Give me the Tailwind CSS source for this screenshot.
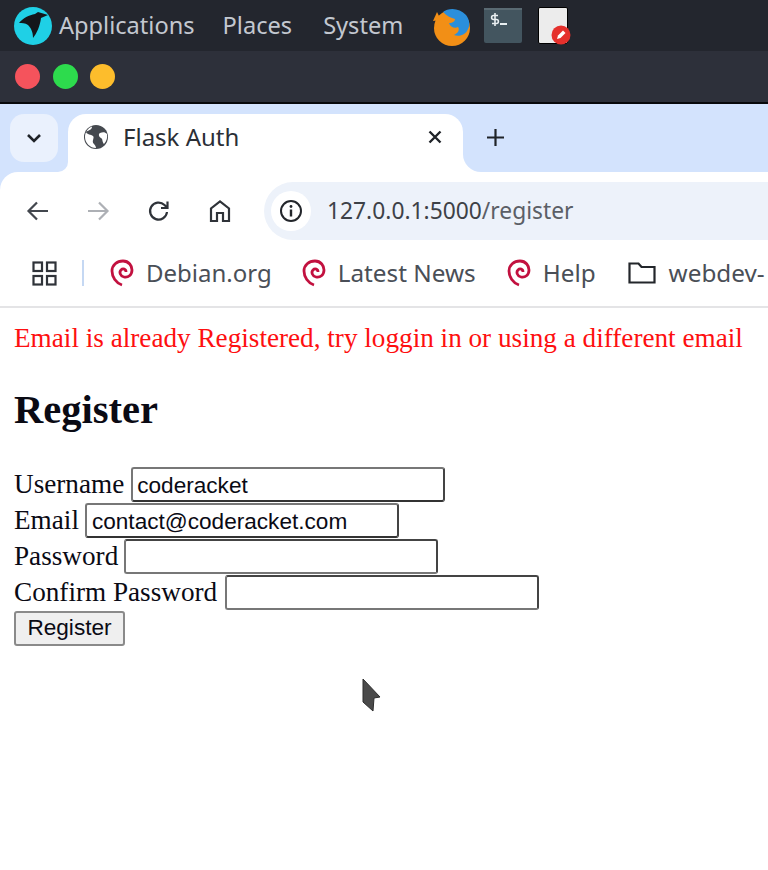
<!DOCTYPE html>
<html lang="en">
<head>
    <meta charset="UTF-8">
    <meta name="viewport" content="width=device-width, initial-scale=1.0">
    <title>Flask Auth</title>
    <script src="https://cdn.jsdelivr.net/npm/@tailwindcss/browser@4"></script>
</head>
<body class="w-[768px] h-[870px] overflow-hidden bg-[#d3e3fd] font-['Noto_Sans',sans-serif]">
    <!-- desktop panel -->
    <div class="h-[51px] bg-[#23262e] flex items-center pl-[13px] text-[#c3c8d0] text-[23.6px] overflow-hidden">
        <svg class="w-[40px] h-[40px] shrink-0" viewBox="0 0 40 40">
            <circle cx="20" cy="20" r="19" fill="#1fd0e6"/>
            <path d="M6 17 C10 12 16 9 22 8 L25 6 L35 9 L28 12 C27 20 24 27 20 32 C20 26 18 22 15 19 C12 17 9 17 6 17 Z" fill="#14161a"/>
        </svg>
        <span class="ml-[6px]">Applications</span>
        <span class="ml-[28px]">Places</span>
        <span class="ml-[31px]">System</span>
        <svg class="w-[40px] h-[40px] ml-[29px] shrink-0" viewBox="0 0 40 40">
            <circle cx="20" cy="22" r="18" fill="#f28f16"/>
            <path d="M11 6 C17 1 28 2 34 9 C38 14 38 20 36 23 C34 29 27 31 22 29 C26 27 28 24 26 21 C23 23 18 21 17 17 C21 17 23 15 23 13 C19 12 15 10 11 6 Z" fill="#2b8fdc"/>
            <path d="M1 15 L5 6 L9 14 Z" fill="#f28f16"/>
        </svg>
        <svg class="w-[38px] h-[35px] ml-[12px] shrink-0" viewBox="0 0 38 35">
            <rect x="0" y="0" width="38" height="35" rx="2" fill="#43555f"/>
            <rect x="0" y="0" width="38" height="2" fill="#5a6a73"/>
            <path d="M11 5 V18 M14 7.500 H9.500 C7 7.500 7 11.500 9.500 11.500 H12.500 C15 11.500 15 15.500 12.500 15.500 H8" fill="none" stroke="#e8eef0" stroke-width="1.600"/>
            <rect x="16" y="15" width="7" height="2" fill="#e8eef0"/>
        </svg>
        <div class="relative w-[30px] h-[37px] ml-[16px] shrink-0 bg-[#ececec] border border-black rounded-[2px]">
            <svg class="absolute left-[12px] top-[17px] w-[20px] h-[20px]" viewBox="0 0 20 20">
                <circle cx="10" cy="10" r="9.500" fill="#e5302c"/>
                <path d="M6 14 L7 10.500 L12 5.500 L14.500 8 L9.500 13 Z" fill="#fff"/>
            </svg>
        </div>
    </div>
    <!-- window title bar -->
    <div class="h-[51px] bg-[#2d303a] flex items-center gap-[12.5px] pl-[15px]">
        <div class="w-[25px] h-[25px] rounded-full bg-[#f5535c]"></div>
        <div class="w-[25px] h-[25px] rounded-full bg-[#2ddb4d]"></div>
        <div class="w-[25px] h-[25px] rounded-full bg-[#fdbd2c]"></div>
    </div>
    <div class="h-[2px] bg-[#08090b]"></div>
    <!-- tab strip -->
    <div class="h-[68px] bg-[#d3e3fd] flex items-start pt-[10px] pl-[10px]">
        <div class="w-[48px] h-[48px] rounded-[14px] bg-[#eaf1fd] flex items-center justify-center">
            <svg class="w-[16px] h-[10px]" viewBox="0 0 16 10"><path d="M2 2 L8 8 L14 2" fill="none" stroke="#1f2328" stroke-width="2.600"/></svg>
        </div>
        <div class="relative w-[395px] h-[58px] ml-[10px] bg-white rounded-t-[18px] flex items-center pl-[15px] pb-[12px] text-[#2b2f36] text-[24px]">
            <!-- concave corners at the foot of the tab -->
            <div class="absolute left-[-10px] bottom-0 w-[10px] h-[10px] bg-white"><div class="w-full h-full bg-[#d3e3fd] rounded-br-[10px]"></div></div>
            <div class="absolute right-[-18px] bottom-0 w-[18px] h-[18px] bg-white"><div class="w-full h-full bg-[#d3e3fd] rounded-bl-[18px]"></div></div>
            <svg class="w-[26px] h-[26px] shrink-0" viewBox="0 0 26 26">
                <circle cx="13" cy="13" r="12" fill="#45494f"/>
                <path d="M9 2.500 C9 6 6 6 3 8 C4 11 8 10 10 12 C12 14 8 17 11 20 C13 22 13 24 13 24 C7 24 2 19 2 13 C2 8 5 4 9 2.500 Z M17 9 C20 8 22 8 24 10 C24.500 13 24 17 21 20 C19 18 20 15 18 14 C16 13 15 10 17 9 Z" fill="#fff"/>
            </svg>
            <span class="ml-[14px] leading-none">Flask Auth</span>
            <svg class="w-[14px] h-[14px] ml-auto mr-[21px]" viewBox="0 0 14 14"><path d="M1.500 1.500 L12.500 12.500 M12.500 1.500 L1.500 12.500" stroke="#1f2328" stroke-width="2.400"/></svg>
        </div>
        <svg class="w-[17px] h-[17px] ml-[24px] mt-[15px]" viewBox="0 0 17 17"><path d="M8.500 0 V17 M0 8.500 H17" stroke="#1f2328" stroke-width="2.200"/></svg>
    </div>
    <!-- toolbar -->
    <div class="h-[68px] bg-white pt-[10px] rounded-tl-[18px] flex items-center pl-[26px] overflow-hidden">
        <svg class="w-[24px] h-[24px] shrink-0" viewBox="0 0 24 24"><path d="M22 12 H3 M11 3.500 L2.500 12 L11 20.500" fill="none" stroke="#43474e" stroke-width="2.200"/></svg>
        <svg class="w-[24px] h-[24px] ml-[36px] shrink-0" viewBox="0 0 24 24"><path d="M2 12 H21 M13 3.500 L21.500 12 L13 20.500" fill="none" stroke="#adb0b5" stroke-width="2.200"/></svg>
        <svg class="w-[24px] h-[24px] ml-[37px] shrink-0" viewBox="0 0 24 24"><path d="M20 13 A8.500 8.500 0 1 1 17.500 6 L20.500 9 M20.500 2.500 V9 H14" fill="none" stroke="#2f3339" stroke-width="2.200"/></svg>
        <svg class="w-[24px] h-[24px] ml-[37px] shrink-0" viewBox="0 0 24 24"><path d="M3 22 V9.500 L12 2.500 L21 9.500 V22 H15 V14 H9 V22 Z" fill="none" stroke="#2f3339" stroke-width="2.200"/></svg>
        <div class="h-[58px] ml-[32px] pl-[7px] flex-1 bg-[#edf2fa] rounded-l-[29px] flex items-center -mr-px">
            <div class="w-[40px] h-[40px] rounded-full bg-white flex items-center justify-center shrink-0">
                <svg class="w-[24px] h-[24px]" viewBox="0 0 24 24"><circle cx="12" cy="12" r="10" fill="none" stroke="#23262b" stroke-width="2"/><path d="M12 10.500 V17.500" stroke="#23262b" stroke-width="2.400"/><circle cx="12" cy="7.500" r="1.400" fill="#23262b"/></svg>
            </div>
            <span class="ml-[16px] text-[22.800px] text-[#3d4147]">127.0.0.1:5000<span class="text-[#5b5f66]">/register</span></span>
        </div>
    </div>
    <!-- bookmarks bar -->
    <div class="h-[68px] bg-white border-b-2 border-[#e4e4e6] flex items-center pl-[32px] text-[24.300px] text-[#4a4f57] whitespace-nowrap overflow-hidden">
        <svg class="w-[25px] h-[25px] shrink-0" viewBox="0 0 25 25"><g fill="none" stroke="#2f3339" stroke-width="2.200"><rect x="1.500" y="1.500" width="8.500" height="8.500"/><rect x="15" y="1.500" width="8.500" height="8.500"/><rect x="1.500" y="15" width="8.500" height="8.500"/><rect x="15" y="15" width="8.500" height="8.500"/></g></svg>
        <div class="w-[2px] h-[26px] ml-[25px] bg-[#c5d8f3] shrink-0"></div>
        <svg class="w-[24px] h-[28px] ml-[26px] shrink-0" viewBox="0 0 24 28"><path d="M12 26 C6 24 2 18 2 12 C2 6 7 2 13 2 C19 2 22 7 22 11 C22 16 18 19 14 18 C10 17 9 13 11 11 C13 9 16 10 16 13" fill="none" stroke="#c2113f" stroke-width="2.800"/></svg>
        <span class="ml-[12px] text-[24px]">Debian.org</span>
        <svg class="w-[24px] h-[28px] ml-[30px] shrink-0" viewBox="0 0 24 28"><path d="M12 26 C6 24 2 18 2 12 C2 6 7 2 13 2 C19 2 22 7 22 11 C22 16 18 19 14 18 C10 17 9 13 11 11 C13 9 16 10 16 13" fill="none" stroke="#c2113f" stroke-width="2.800"/></svg>
        <span class="ml-[12px]">Latest News</span>
        <svg class="w-[24px] h-[28px] ml-[31px] shrink-0" viewBox="0 0 24 28"><path d="M12 26 C6 24 2 18 2 12 C2 6 7 2 13 2 C19 2 22 7 22 11 C22 16 18 19 14 18 C10 17 9 13 11 11 C13 9 16 10 16 13" fill="none" stroke="#c2113f" stroke-width="2.800"/></svg>
        <span class="ml-[12px]">Help</span>
        <svg class="w-[28px] h-[22px] ml-[32px] shrink-0" viewBox="0 0 28 22"><path d="M1.500 20.500 V1.500 H10.500 L13.500 5 H26.500 V20.500 Z" fill="none" stroke="#23262b" stroke-width="2.200"/></svg>
        <span class="ml-[13px]">webdev-</span>
    </div>
    <!-- page content -->
    <main class="relative h-[562px] bg-white pl-[14px] font-['Liberation_Serif',serif] text-[27.200px] leading-[32px] text-[#0a0a14]">
        <p class="pt-[14px] text-[#fe0f10] whitespace-nowrap">Email is already Registered, try loggin in or using a different email</p>
        <h2 class="mt-[31px] text-[40.500px] leading-[50px] font-bold">Register</h2>
        <form class="mt-[31px] flex flex-col items-start">
            <div class="h-[36px] flex items-center gap-[7px]"><label>Username</label><input value="coderacket" class="w-[314px] h-[35px] pl-[4px] pt-[3px] bg-white border-2 border-t-[#777] border-l-[#777] border-r-[#444] border-b-[#333] rounded-[3px] font-['Liberation_Sans',sans-serif] text-[22.600px]"></div>
            <div class="h-[36px] flex items-center gap-[6px]"><label>Email</label><input value="contact@coderacket.com" class="w-[314px] h-[35px] pl-[5px] pt-[3px] bg-white border-2 border-t-[#777] border-l-[#777] border-r-[#444] border-b-[#333] rounded-[3px] font-['Liberation_Sans',sans-serif] text-[22.600px]"></div>
            <div class="h-[36px] flex items-center gap-[6px]"><label>Password</label><input class="w-[314px] h-[35px] px-[5px] bg-white border-2 border-t-[#444] border-l-[#777] border-r-[#444] border-b-[#777] rounded-[3px]"></div>
            <div class="h-[36px] flex items-center gap-[8px]"><label>Confirm Password</label><input class="w-[314px] h-[35px] px-[5px] bg-white border-2 border-t-[#444] border-l-[#777] border-r-[#444] border-b-[#777] rounded-[3px]"></div>
            <button type="button" class="w-[111px] h-[35px] mt-px bg-[#efefef] border-2 border-[#8a8a8a] rounded-[3px] font-['Liberation_Sans',sans-serif] text-[22.600px] leading-none">Register</button>
        </form>
        <svg class="absolute left-[360px] top-[370px] w-[22px] h-[36px]" viewBox="0 0 22 36"><path d="M3 1 L20 19 L14 20 L13 33 L3 24 Z" fill="#4a4a4a" stroke="#2d2d2d" stroke-width="1"/></svg>
    </main>
</body>
</html>
